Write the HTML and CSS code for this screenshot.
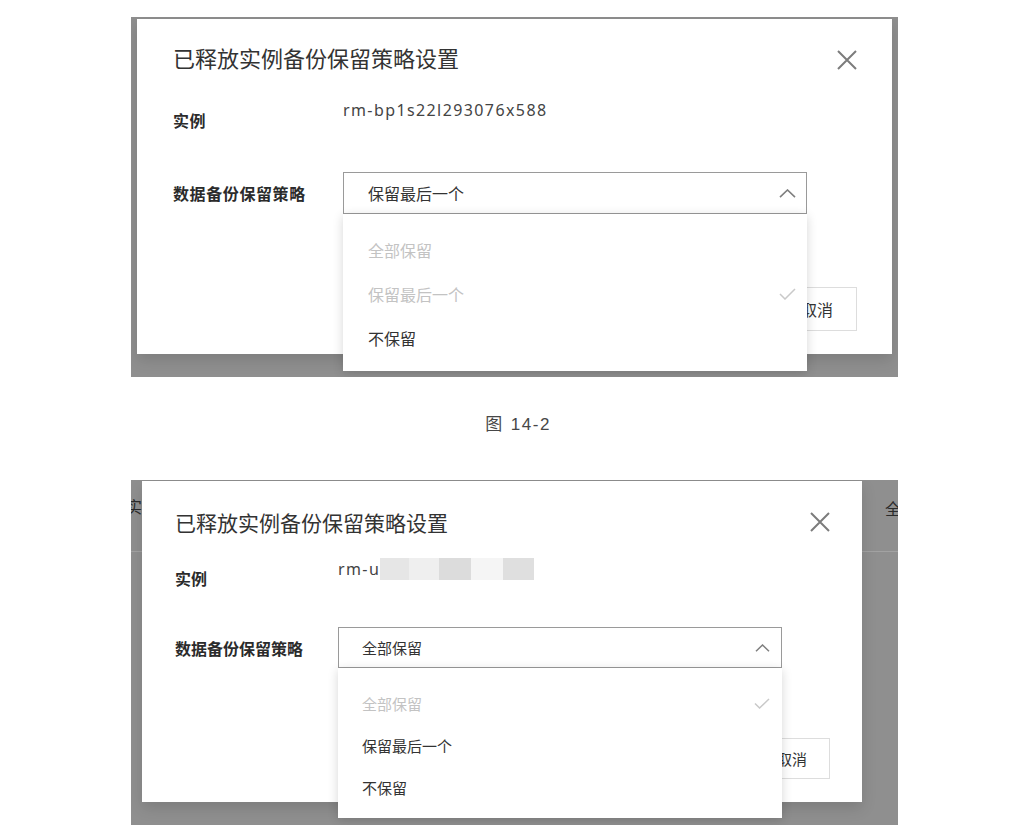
FILE: index.html
```html
<!DOCTYPE html>
<html lang="zh-CN">
<head>
<meta charset="utf-8">
<title>已释放实例备份保留策略设置</title>
<link rel="stylesheet" href="styles.css">
</head>
<body>
<main class="page">
  <figure class="shot shot-a">
    <div class="dialog">
      <h2 class="dialog-title">已释放实例备份保留策略设置</h2>
      <button class="close" aria-label="关闭">
        <svg viewBox="0 0 20 20" width="20" height="20"><path d="M1 1L19 19M19 1L1 19" stroke="#7c7c7c" stroke-width="2" fill="none"/></svg>
      </button>
      <div class="row row-instance">
        <span class="label">实例</span>
        <span class="value">rm-bp1s22l293076x588</span>
      </div>
      <div class="row row-policy">
        <span class="label">数据备份保留策略</span>
        <div class="select-wrap">
          <div class="select">
            <span>保留最后一个</span>
            <svg class="chev" viewBox="0 0 17 9" width="17" height="9"><path d="M1 8.2L8.5 1L16 8.2" stroke="#7f7f7f" stroke-width="1.6" fill="none"/></svg>
          </div>
          <ul class="menu">
            <li class="item disabled"><span>全部保留</span></li>
            <li class="item disabled"><span>保留最后一个</span>
              <svg class="check" viewBox="0 0 17 12" width="17" height="12"><path d="M1 6L6 11L16 1" stroke="#c9c9c9" stroke-width="1.5" fill="none"/></svg>
            </li>
            <li class="item"><span>不保留</span></li>
          </ul>
        </div>
      </div>
      <div class="footer">
        <button class="btn btn-primary">确定</button>
        <button class="btn">取消</button>
      </div>
    </div>
  </figure>

  <p class="caption">图 14-2</p>

  <figure class="shot shot-b">
    <div class="behind">
      <span class="behind-left">实</span>
      <span class="behind-right">全</span>
    </div>
    <div class="dialog">
      <h2 class="dialog-title">已释放实例备份保留策略设置</h2>
      <button class="close" aria-label="关闭">
        <svg viewBox="0 0 20 20" width="20" height="20"><path d="M1 1L19 19M19 1L1 19" stroke="#7c7c7c" stroke-width="2" fill="none"/></svg>
      </button>
      <div class="row row-instance">
        <span class="label">实例</span>
        <span class="value">rm-u<span class="mosaic"><i class="m1"></i><i class="m2"></i><i class="m3"></i><i class="m4"></i><i class="m5"></i></span></span>
      </div>
      <div class="row row-policy">
        <span class="label">数据备份保留策略</span>
        <div class="select-wrap">
          <div class="select">
            <span>全部保留</span>
            <svg class="chev" viewBox="0 0 15 8" width="15" height="8"><path d="M1 7.2L7.5 1L14 7.2" stroke="#7f7f7f" stroke-width="1.5" fill="none"/></svg>
          </div>
          <ul class="menu">
            <li class="item disabled"><span>全部保留</span>
              <svg class="check" viewBox="0 0 16 11" width="16" height="11"><path d="M1 5.5L5.6 10L15 1" stroke="#c9c9c9" stroke-width="1.5" fill="none"/></svg>
            </li>
            <li class="item"><span>保留最后一个</span></li>
            <li class="item"><span>不保留</span></li>
          </ul>
        </div>
      </div>
      <div class="footer">
        <button class="btn btn-primary">确定</button>
        <button class="btn">取消</button>
      </div>
    </div>
  </figure>
</main>
</body>
</html>
```

FILE: styles.css
```css
* { box-sizing: border-box; }

html, body {
  margin: 0;
  padding: 0;
  background: #ffffff;
}

body {
  font-family: "Noto Sans", "Noto Sans CJK SC", sans-serif;
  color: #333333;
}

.page {
  width: 767px;
  margin-left: 131px;
  padding-top: 17px;
  display: flex;
  flex-direction: column;
}

.shot {
  margin: 0;
  background: #8f8f8f;
  overflow: hidden;
}

/* ---------- Figure A ---------- */
.shot-a {
  padding: 2px 6px 23px 6px;
}

.shot-a .dialog {
  width: 755px;
  padding: 23px 35px 23px 36px;
}

/* ---------- Figure B ---------- */
.shot-b {
  margin-top: 43px;
  display: grid;
}

.shot-b > .behind,
.shot-b > .dialog {
  grid-area: 1 / 1;
}

.behind {
  height: 72px;
  border-bottom: 1px solid #a2a2a2;
  display: flex;
  align-items: flex-start;
  font-family: "Noto Sans CJK SC", sans-serif;
  font-size: 16px;
  line-height: 20px;
  color: #2a2a2a;
}

.behind-left {
  margin-left: -5px;
  margin-top: 16px;
  white-space: nowrap;
}

.behind-right {
  margin-left: auto;
  margin-top: 18px;
  width: 13px;
  overflow: hidden;
  white-space: nowrap;
}

.shot-b .dialog {
  width: 720px;
  margin: 1px 0 23px 11px;
  padding: 27px 32px 23px 33px;
  z-index: 1;
}

/* ---------- Dialog ---------- */
.dialog {
  position: relative;
  background: #ffffff;
  box-shadow: 0 6px 14px rgba(0, 0, 0, 0.13);
}

.dialog-title {
  margin: 0;
  font-family: "Noto Sans CJK SC", sans-serif;
  font-weight: 400;
  font-size: 22px;
  line-height: 30px;
  color: #333333;
}

.shot-b .dialog-title {
  font-size: 21px;
  line-height: 28px;
}

.close {
  position: absolute;
  top: 31px;
  right: 35px;
  width: 20px;
  height: 20px;
  padding: 0;
  border: 0;
  background: none;
  display: block;
}

.close svg { display: block; }

.shot-b .close { right: 32px; }

.row {
  display: flex;
}

.row-instance {
  margin-top: 28px;
  align-items: flex-start;
}

.shot-b .row-instance { margin-top: 22px; }

.row-policy {
  margin-top: 42px;
  align-items: center;
}

.shot-b .row-policy { margin-top: 39px; }

.label {
  flex: 0 0 170px;
  font-family: "Noto Sans CJK SC", sans-serif;
  font-weight: 700;
  font-size: 16px;
  letter-spacing: 0.6px;
  line-height: 20px;
  color: #2b2b2b;
}

.shot-b .label {
  flex-basis: 163px;
  letter-spacing: 0;
}

.row-instance .label { margin-top: 10px; }

.value {
  display: flex;
  align-items: center;
  font-size: 16px;
  line-height: 20px;
  letter-spacing: 1.4px;
  color: #444444;
}

.mosaic {
  display: flex;
  margin-left: 0;
  height: 22px;
}

.mosaic i {
  display: block;
  height: 22px;
}

.mosaic .m1 { background: #e6e6e6; width: 29px; }
.mosaic .m2 { background: #efefef; width: 30px; }
.mosaic .m3 { background: #dcdcdc; width: 32px; }
.mosaic .m4 { background: #f5f5f5; width: 32px; }
.mosaic .m5 { background: #dfdfdf; width: 31px; }

.select-wrap {
  position: relative;
}

.select {
  width: 464px;
  height: 42px;
  border: 1px solid #9a9a9a;
  padding: 0 10px 0 24px;
  display: flex;
  align-items: center;
  justify-content: space-between;
  font-family: "Noto Sans CJK SC", sans-serif;
  font-size: 16px;
  color: #333333;
  background: #ffffff;
}

.shot-b .select {
  width: 444px;
  height: 41px;
  padding: 0 11px 0 23px;
  font-size: 15px;
}

.chev { display: block; }

.menu {
  position: absolute;
  top: 100%;
  left: 0;
  right: 0;
  z-index: 2;
  margin: 0;
  padding: 14px 0 11px 0;
  list-style: none;
  background: #ffffff;
  box-shadow: 0 2px 10px rgba(0, 0, 0, 0.16);
  font-family: "Noto Sans CJK SC", sans-serif;
  font-size: 16px;
}

.shot-b .menu {
  padding-bottom: 10px;
  font-size: 15px;
}

.item {
  height: 44px;
  padding: 0 11px 0 25px;
  display: flex;
  align-items: center;
  justify-content: space-between;
  color: #333333;
}

.shot-b .item {
  height: 42px;
  padding: 0 12px 0 24px;
}

.item.disabled { color: #c3c3c3; }

.check { display: block; }

.footer {
  margin-top: 73px;
  display: flex;
  justify-content: flex-end;
  gap: 10px;
}

.shot-b .footer { margin-top: 70px; }

.btn {
  width: 80px;
  height: 44px;
  border: 1px solid #dddddd;
  background: #ffffff;
  font-family: "Noto Sans CJK SC", sans-serif;
  font-size: 16px;
  color: #333333;
  padding: 0;
}

.shot-b .btn {
  width: 76px;
  height: 41px;
  font-size: 15px;
}

.btn-primary {
  background: #00a2ca;
  border-color: #00a2ca;
  color: #ffffff;
}

/* ---------- Caption ---------- */
.caption {
  margin: 36px 0 0 0;
  text-align: center;
  font-family: "Liberation Sans", "Noto Sans CJK SC", sans-serif;
  font-size: 17px;
  line-height: 24px;
  letter-spacing: 1.5px;
  word-spacing: 1px;
  color: #474747;
  padding-left: 7px;
}
```
